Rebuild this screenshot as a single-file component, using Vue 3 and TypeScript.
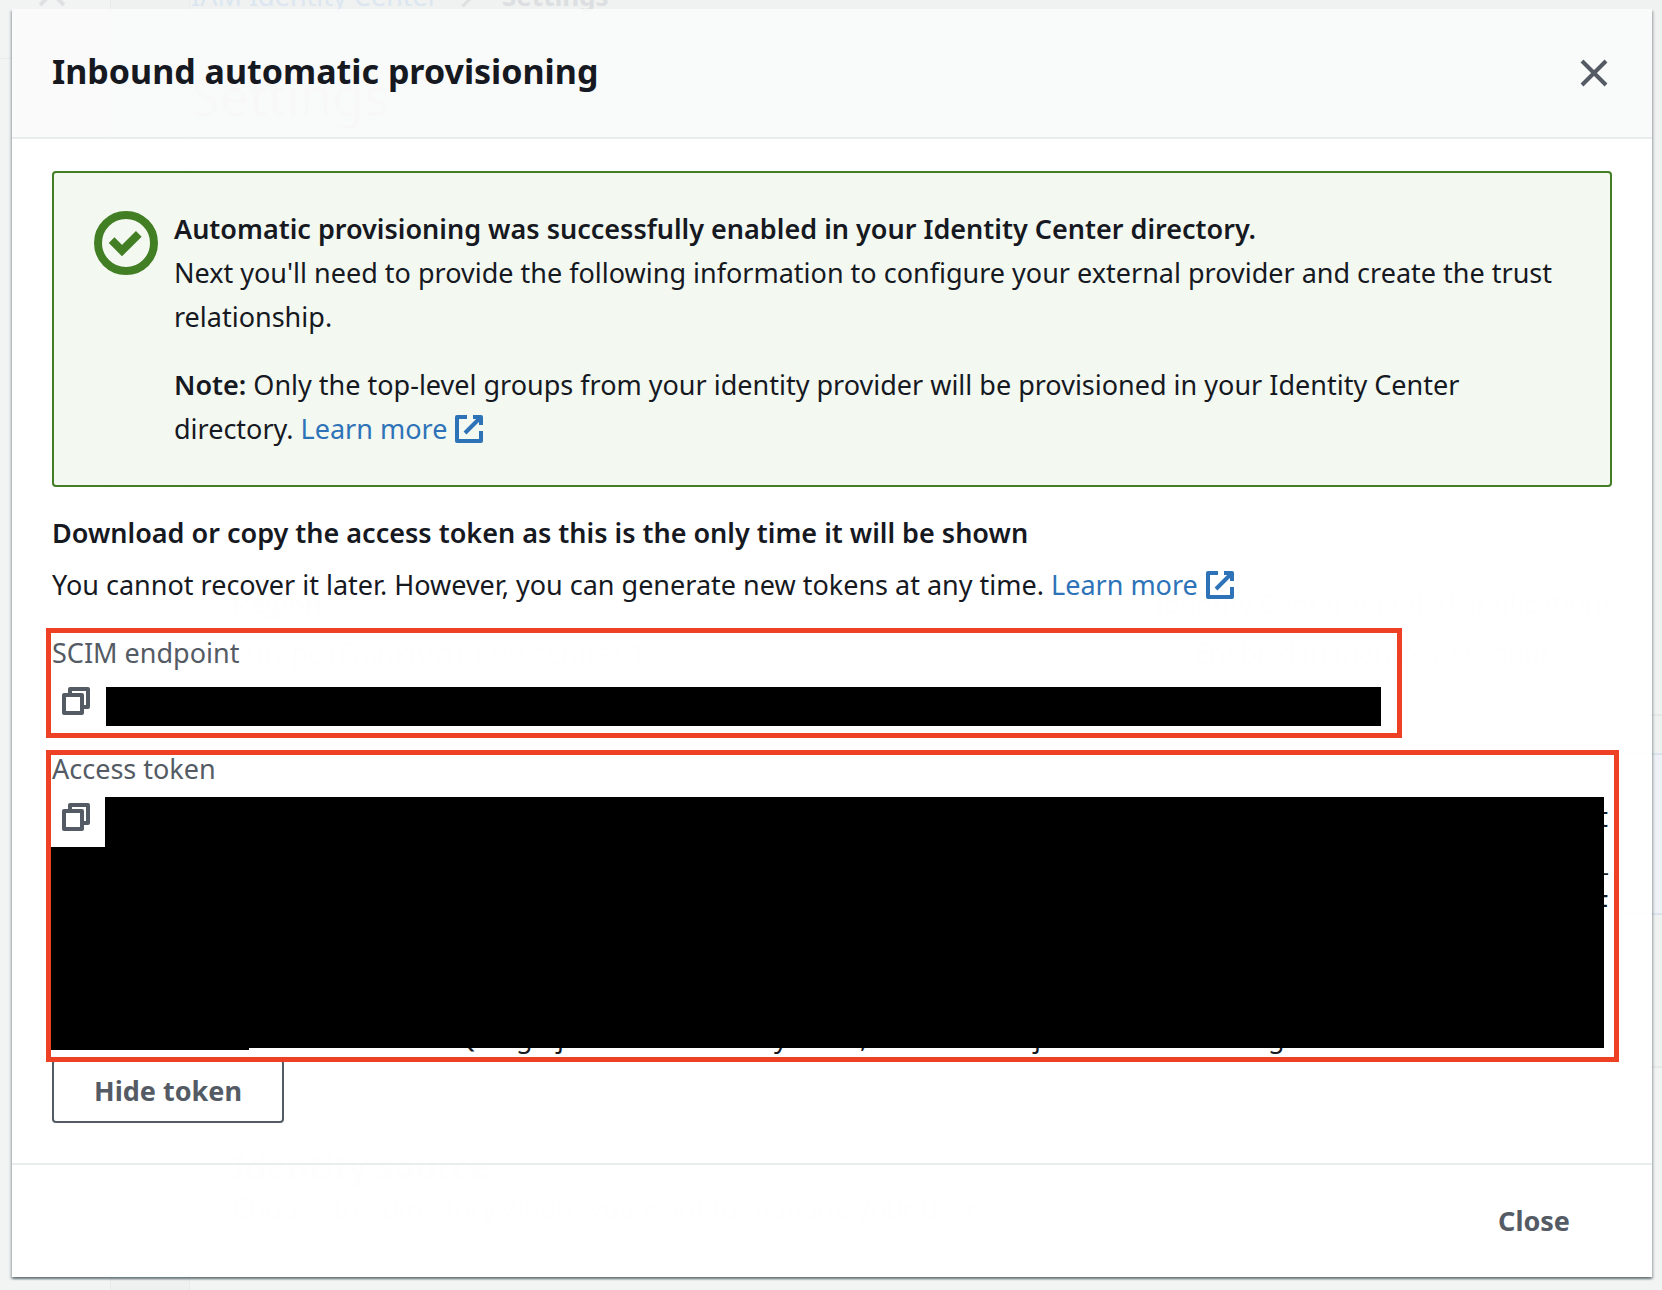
<script setup lang="ts">
interface Ghost {
  text: string
  left: number
  top: number
  kind?: 'title' | 'strong' | 'link' | 'heading'
}

interface Mark {
  char: string
  left: number
}

const ghosts: Ghost[] = [
  { text: 'IAM Identity Center', left: 191, top: -26, kind: 'link' },
  { text: 'Settings', left: 502, top: -26, kind: 'strong' },
  { text: 'Settings', left: 191, top: 66, kind: 'title' },
  { text: 'Details', left: 232, top: 294, kind: 'heading' },
  {
    text: 'Configure your identity source and other settings for managing access to your AWS accounts, resources',
    left: 232,
    top: 336,
  },
  { text: 'ARN', left: 232, top: 447, kind: 'strong' },
  { text: 'Delegated administrator', left: 1165, top: 447, kind: 'strong' },
  { text: 'Region', left: 232, top: 582, kind: 'strong' },
  { text: 'Europe (Frankfurt) | eu-central-1', left: 232, top: 631 },
  { text: 'Identity Center enabled applications', left: 1155, top: 582 },
  { text: 'Enabled in member accounts', left: 1194, top: 631 },
  { text: 'Identity source', left: 232, top: 1144, kind: 'heading' },
  { text: 'Choose the directory where you want to manage your users', left: 232, top: 1186 },
]

const tokenTail: Mark[] = [
  { char: 'Q', left: 404 },
  { char: 'g', left: 464 },
  { char: 'j', left: 505 },
  { char: 'y', left: 722 },
  { char: ',', left: 808 },
  { char: 'j', left: 982 },
  { char: 'g', left: 1216 },
]
</script>

<template>
  <div class="page">
    <div class="backdrop" aria-hidden="true">
      <div class="side">
        <svg class="side-close" viewBox="0 0 16 16"><path d="M2 2l12 12M14 2L2 14" /></svg>
      </div>
      <div class="gutter"></div>
      <div class="content"></div>
      <svg class="crumb-arrow" viewBox="0 0 16 16"><path d="M4 1l7 7-7 7" /></svg>
      <div class="band"></div>
      <span
        v-for="g in ghosts"
        :key="g.text + g.top"
        class="ghost"
        :class="g.kind"
        :style="{ left: g.left + 'px', top: g.top + 'px' }"
        >{{ g.text }}</span
      >
    </div>

    <section class="modal" role="dialog" aria-labelledby="dialog-title">
      <header class="head">
        <h1 id="dialog-title">Inbound automatic provisioning</h1>
        <button class="icon-button" type="button" aria-label="Close dialog">
          <svg class="icon" viewBox="0 0 16 16"><path d="M2 2l12 12M14 2L2 14" /></svg>
        </button>
      </header>

      <div class="body">
        <div class="alert" role="status">
          <svg class="success" viewBox="0 0 16 16" aria-hidden="true">
            <circle cx="8" cy="8" r="7" />
            <path d="M4.4 7.3L7 9.9l4.2-4.2" />
          </svg>
          <div class="alert-text">
            <p><strong>Automatic provisioning was successfully enabled in your Identity Center directory.</strong></p>
            <p>
              Next you'll need to provide the following information to configure your external provider and create the
              trust relationship.
            </p>
            <p class="note">
              <strong>Note:</strong> Only the top-level groups from your identity provider will be provisioned in your
              Identity Center directory.
              <a href="#groups"
                >Learn more<svg class="icon external" viewBox="0 0 16 16" aria-hidden="true">
                  <path d="M10 2h4v4M6 10l8-8M14 9v5H2V2h5" /></svg
              ></a>
            </p>
          </div>
        </div>

        <h2>Download or copy the access token as this is the only time it will be shown</h2>
        <p class="hint">
          You cannot recover it later. However, you can generate new tokens at any time.
          <a href="#tokens"
            >Learn more<svg class="icon external" viewBox="0 0 16 16" aria-hidden="true">
              <path d="M10 2h4v4M6 10l8-8M14 9v5H2V2h5" /></svg
          ></a>
        </p>

        <div class="field endpoint">
          <div class="label">SCIM endpoint</div>
          <div class="value">
            <button class="icon-button" type="button" aria-label="Copy SCIM endpoint">
              <svg class="icon" viewBox="0 0 16 16"><path d="M2 5h9v9H2zM5 5V2h9v9h-3" /></svg>
            </button>
            <div class="redacted"></div>
          </div>
          <div class="outline"></div>
        </div>

        <div class="field token">
          <div class="label">Access token</div>
          <div class="token-value">
            <div class="edge" aria-hidden="true"><span>t</span><span>_</span><span>F</span></div>
            <div class="tail" aria-hidden="true">
              <span v-for="m in tokenTail" :key="m.left" :style="{ left: m.left + 'px' }">{{ m.char }}</span>
            </div>
            <div class="block">
              <button class="icon-button" type="button" aria-label="Copy access token">
                <svg class="icon" viewBox="0 0 16 16"><path d="M2 5h9v9H2zM5 5V2h9v9h-3" /></svg>
              </button>
            </div>
          </div>
          <div class="outline"></div>
        </div>

        <button class="button" type="button">Hide token</button>
      </div>

      <footer class="foot">
        <button class="button plain" type="button">Close</button>
      </footer>
    </section>
  </div>
</template>

<style>
body {
  margin: 0;
  background: #f2f4f4;
}
</style>

<style scoped>
.page {
  position: relative;
  box-sizing: border-box;
  min-height: 100vh;
  padding: 9px 10px 13px 12px;
  overflow: hidden;
  color: #16191f;
  font: 27px/44px 'Noto Sans', 'Open Sans', sans-serif;
}

h1,
h2,
p {
  margin: 0;
}

/* Dimmed console page behind the dialog */
.backdrop {
  position: absolute;
  inset: 0;
  display: flex;
  background: #f2f4f3;
}
.side {
  box-sizing: border-box;
  width: 110px;
  background: linear-gradient(#e9ecec, #e9ecec) 0 58px / 100% 1px no-repeat #f2f4f4;
}
.gutter {
  box-sizing: border-box;
  width: 80px;
  background: #eff1f1;
  border-left: 1px solid #e9ebeb;
  border-right: 1px solid #e9ebeb;
}
.content {
  flex: 1;
  background: linear-gradient(#eff2f1 1066px, #e6e9e8 1066px, #e6e9e8 1068px, #f2f4f3 1068px);
}
.band {
  position: absolute;
  top: 714px;
  right: 0;
  width: 40px;
  height: 201px;
  box-sizing: border-box;
  background: linear-gradient(#e6e8e8 2px, #eff1f1 2px, #eff1f1 39px, #dbe4ec 39px, #dbe4ec 41px, #eef1f5 41px);
  border-bottom: 2px solid #dbe4ec;
}
.side-close {
  position: absolute;
  left: 36px;
  top: -23px;
  width: 32px;
  fill: none;
  stroke: #dfe1e2;
  stroke-width: 2;
}
.crumb-arrow {
  position: absolute;
  left: 456px;
  top: -18px;
  width: 26px;
  fill: none;
  stroke: #dfe1e2;
  stroke-width: 2;
}
.ghost {
  position: absolute;
  color: #dcdfe1;
  white-space: nowrap;
}
.ghost.strong {
  font-size: 26px;
  font-weight: 700;
}
.ghost.heading {
  font-size: 34px;
  font-weight: 700;
}
.ghost.title {
  font-size: 52px;
  line-height: 60px;
}
.ghost.link {
  color: #dbe6f0;
}

/* Dialog */
.modal {
  position: relative;
  box-shadow:
    0 2px 2px rgba(0, 28, 36, 0.4),
    2px 2px 2px rgba(0, 28, 36, 0.15),
    -2px 2px 2px rgba(0, 28, 36, 0.15);
}
.head {
  display: flex;
  align-items: center;
  justify-content: space-between;
  padding: 40px 42px 44px 40px;
  background: rgba(250, 250, 250, 0.94);
  border-bottom: 2px solid #eaeded;
}
.head .icon-button {
  margin-top: 4px;
}
h1 {
  font-size: 34px;
  line-height: 44px;
}
.body {
  padding: 32px 40px 40px;
  background: rgba(255, 255, 255, 0.95);
}

.icon-button {
  display: block;
  padding: 0;
  border: 0;
  background: none;
  color: #545b64;
  cursor: pointer;
}
.icon {
  display: block;
  width: 32px;
  height: 32px;
  fill: none;
  stroke: currentColor;
  stroke-width: 2;
  stroke-linejoin: round;
}
.icon.external {
  display: inline-block;
  margin-left: 6px;
  vertical-align: -6px;
}

.alert {
  display: flex;
  gap: 16px;
  padding: 34px 40px;
  background: rgba(242, 248, 240, 0.95);
  border: 2px solid #417e24;
  border-radius: 4px;
}
.success {
  flex: none;
  width: 64px;
  height: 64px;
  margin-top: 4px;
  fill: none;
  stroke: #417e24;
  stroke-width: 2;
}
.note {
  margin-top: 24px;
}
strong,
h2 {
  font-size: 27px;
  font-weight: 600;
}
a {
  color: #2e73b8;
  text-decoration: none;
  white-space: nowrap;
}
h2 {
  margin-top: 24px;
  line-height: 44px;
}
.hint {
  height: 44px;
  margin-top: 8px;
}

.field {
  position: relative;
}
.label {
  color: #545b64;
}
.outline {
  position: absolute;
  border: 5px solid #ed4025;
  pointer-events: none;
}
.endpoint {
  margin: 24px 210px 0 0;
}
.endpoint .outline {
  inset: -3px 0 -11px -6px;
}
.value {
  display: flex;
  align-items: flex-start;
  gap: 14px;
  padding: 10px 21px 1px 8px;
}
.redacted {
  flex: 1;
  height: 39px;
  margin-top: 2px;
  background: #000;
}
.token {
  margin-top: 20px;
}
.token .outline {
  inset: 3px -7px -3px -6px;
}
.token-value {
  position: relative;
  padding: 6px 8px 11px 0;
}
.block {
  position: relative;
  height: 251px;
  margin-left: -1px;
  background: #000;
}
.block .icon-button {
  width: 54px;
  height: 50px;
  padding: 4px 12px 14px 9px;
  background: #fff;
}
.block::after {
  content: '';
  position: absolute;
  left: 0;
  bottom: -2px;
  width: 198px;
  height: 2px;
  background: #000;
}
.edge {
  position: absolute;
  top: 4px;
  right: 4px;
  display: flex;
  flex-direction: column;
  align-items: flex-end;
}
.tail {
  position: absolute;
  left: 0;
  right: 0;
  top: 224px;
  height: 44px;
}
.tail span {
  position: absolute;
}

.button {
  display: block;
  height: 64px;
  padding: 0 40px;
  border: 2px solid #545b64;
  border-radius: 4px;
  background: #fff;
  color: #545b64;
  font: 700 27px/44px 'Noto Sans', 'Open Sans', sans-serif;
  cursor: pointer;
}
.button.plain {
  border-color: transparent;
  background: none;
}
.foot {
  display: flex;
  justify-content: flex-end;
  padding: 24px 40px;
  background: rgba(255, 255, 255, 0.95);
  border-top: 2px solid #eaeded;
}
</style>
